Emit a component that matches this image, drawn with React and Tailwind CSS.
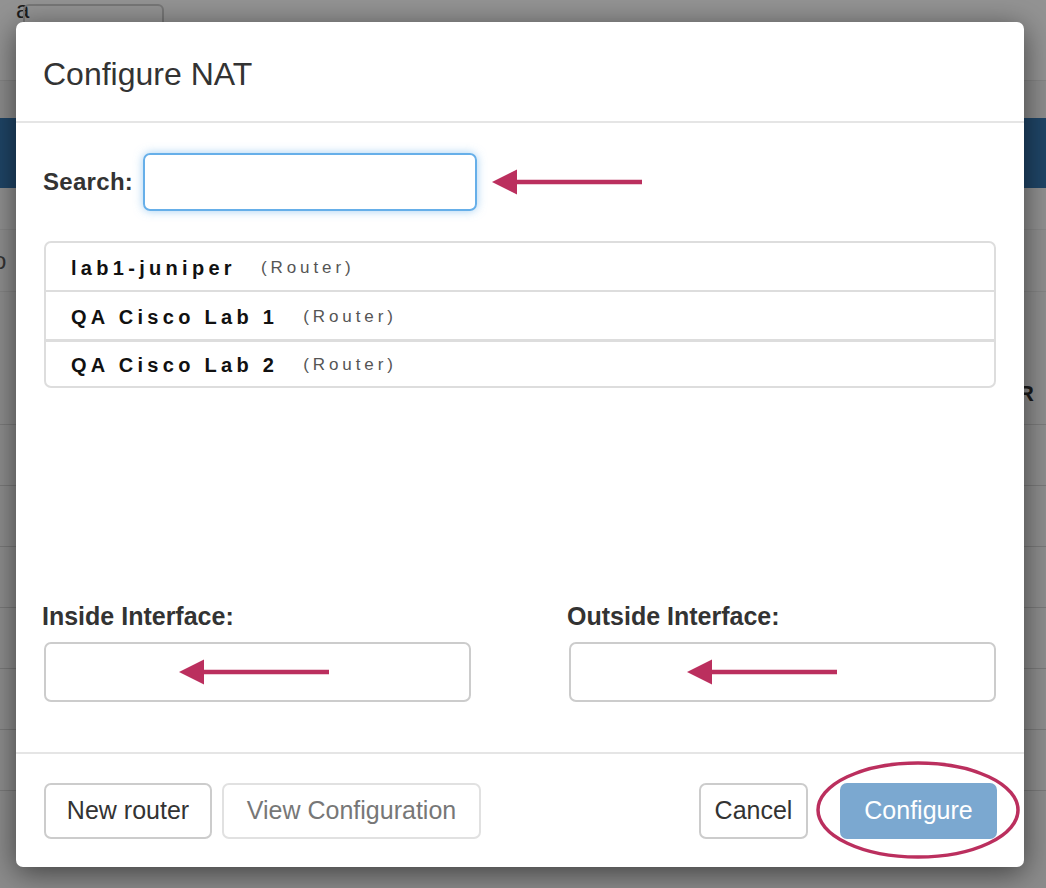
import React from 'react';

const Arrow = ({ className }) => (
  <svg className={className} width="150" height="26" viewBox="0 0 150 26" fill="none">
    <line x1="20" y1="13" x2="150" y2="13" stroke="#bb2f5e" strokeWidth="4.5" />
    <polygon points="0,13 25,0.5 25,25.5" fill="#bb2f5e" />
  </svg>
);

const routers = [
  { name: 'lab1-juniper', type: '(Router)' },
  { name: 'QA Cisco Lab 1', type: '(Router)' },
  { name: 'QA Cisco Lab 2', type: '(Router)' },
];

const BackgroundPage = () => (
  <div className="flex flex-col w-full h-full">
    {/* top toolbar, mostly hidden behind the modal */}
    <div className="h-[81px] bg-[#939393] border-b border-[#858585] flex items-start">
      <span className="text-[24px] leading-none text-[#1c1c1c] ml-[16px] -mt-[2px]">a</span>
      <div className="-ml-[6px] mt-[4px] w-[141px] h-[30px] border-2 border-[#777] rounded-[6px]" />
    </div>
    <div className="h-[37px] bg-[#8d8d8d]" />
    <div className="h-[70px] bg-[#1f4567]" />
    <div className="h-[42px] bg-[#919191] border-b border-[#888]" />
    <div className="h-[62px] bg-[#8f8f8f] border-b border-[#858585] flex items-center">
      <span className="text-[24px] text-[#333] -ml-[7px]">o</span>
    </div>
    <div className="h-[133px] bg-[#8e8e8e] border-b border-[#7c7c7c] flex items-end justify-end pb-[14px]">
      <span className="text-[22px] font-bold text-[#1a1a1a] mr-[12px]">R</span>
    </div>
    {[0, 1, 2, 3, 4, 5].map(i => (
      <div key={i} className="h-[61px] bg-[#8e8e8e] border-b border-[#7a7a7a]" />
    ))}
    <div className="flex-1 bg-[#8c8c8c]" />
  </div>
);

export default function App() {
  return (
    <div
      className="relative w-[1046px] h-[888px] overflow-hidden bg-[#8e8e8e]"
      style={{ fontFamily: '"Liberation Sans", Arial, sans-serif' }}
    >
      <BackgroundPage />

      {/* Modal */}
      <div className="absolute left-[16px] top-[22px] w-[1008px] h-[845px] bg-white rounded-[7px] shadow-[0_6px_30px_rgba(0,0,0,0.55)] flex flex-col">
        {/* Header */}
        <div className="h-[101px] border-b-2 border-[#e5e5e5] flex items-center px-[27px]">
          <h4 className="text-[32px] text-[#333] leading-none mt-[4px]">Configure NAT</h4>
        </div>

        {/* Body */}
        <div className="h-[629px] px-[28px] pt-[30px] flex flex-col">
          <div className="flex items-center">
            <label className="text-[24px] font-bold text-[#333] -ml-[1px] mr-[10px] tracking-[0.3px]">Search:</label>
            <div className="w-[334px] h-[58px] border-2 border-[#66afe9] rounded-[7px] shadow-[0_0_10px_rgba(102,175,233,0.6)]" />
            <Arrow className="ml-[15px]" />
          </div>

          <div className="mt-[30px] border-2 border-[#dddddd] rounded-[7px] overflow-hidden">
            {routers.map((r, i) => (
              <div
                key={r.name}
                className={
                  i === 0
                    ? 'h-[49px] flex items-center pt-[2px] px-[25px] border-b-2 border-[#dddddd]'
                    : i === 1
                    ? 'h-[50px] flex items-center pt-[2px] px-[25px] border-b-[3px] border-[#dddddd]'
                    : 'h-[44px] flex items-center pt-[2px] px-[25px]'
                }
              >
                <span className="text-[20px] font-bold text-[#111] tracking-[4.3px]">{r.name}</span>
                <span className="text-[17px] text-[#555] tracking-[3.9px] ml-[25px]">{r.type}</span>
              </div>
            ))}
          </div>

          <div className="mt-auto mb-[50px] grid grid-cols-2 gap-[98px]">
            <div className="flex flex-col">
              <label className="text-[25px] font-bold text-[#333] -ml-[2px] leading-none mb-[13px]">Inside Interface:</label>
              <div className="h-[60px] border-2 border-[#cccccc] rounded-[7px] flex items-center pl-[133px]">
                <Arrow />
              </div>
            </div>
            <div className="flex flex-col">
              <label className="text-[25px] font-bold text-[#333] -ml-[2px] leading-none mb-[13px]">Outside Interface:</label>
              <div className="h-[60px] border-2 border-[#cccccc] rounded-[7px] flex items-center pl-[116px]">
                <Arrow />
              </div>
            </div>
          </div>
        </div>

        {/* Footer */}
        <div className="flex-1 border-t-2 border-[#e5e5e5] px-[28px] flex items-center justify-between">
          <div className="flex gap-[10px]">
            <button className="w-[168px] h-[56px] border-2 border-[#cccccc] rounded-[7px] text-[25px] text-[#333] bg-white">
              New router
            </button>
            <button className="w-[259px] h-[56px] border-2 border-[#e1e1e1] rounded-[7px] text-[25px] text-[#777] bg-white">
              View Configuration
            </button>
          </div>
          <div className="relative flex gap-[32px] mr-[-1px]">
            <button className="w-[109px] h-[56px] border-2 border-[#cccccc] rounded-[7px] text-[25px] text-[#333] bg-white">
              Cancel
            </button>
            <button className="w-[157px] h-[56px] rounded-[7px] text-[25px] text-white bg-[#7ba8d0]">
              Configure
            </button>
            {/* annotation ellipse */}
            <svg
              className="absolute -right-[24px] -top-[23px] pointer-events-none"
              width="206"
              height="100"
              viewBox="0 0 206 100"
              fill="none"
            >
              <ellipse cx="103" cy="50" rx="100" ry="47" stroke="#bb2f5e" strokeWidth="3.5" />
            </svg>
          </div>
        </div>
      </div>
    </div>
  );
}
